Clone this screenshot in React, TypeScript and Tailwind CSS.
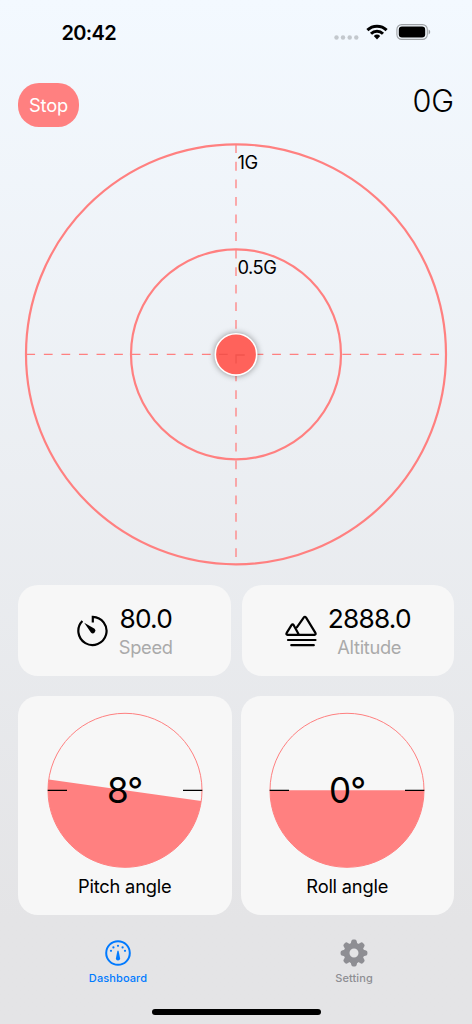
import React from 'react';

const ACCENT = '#ff8080';

function StatusBar() {
  return (
    <div className="flex h-[65px] items-center justify-between pl-[61.5px] pr-[41px]">
      <span className="text-[20px] font-semibold leading-none tracking-[-0.65px]">20:42</span>
      <div className="flex items-center">
        <svg width="25" height="5" viewBox="0 0 25 5" className="mr-[7px] mt-[9px]" fill="#c3c8cd">
          <circle cx="2.5" cy="2.5" r="2.2" />
          <circle cx="9" cy="2.5" r="2.2" />
          <circle cx="15.7" cy="2.5" r="2.2" />
          <circle cx="22.3" cy="2.5" r="2.2" />
        </svg>
        <svg width="22" height="16" viewBox="0 0 22 16" className="-mt-px mr-[8px]">
          <g fill="none" stroke="#000" strokeWidth="3">
            <path d="M1.4 6.1a13.8 13.8 0 0 1 19.2 0" />
            <path d="M5 9.8a8.6 8.6 0 0 1 12 0" />
          </g>
          <path d="M11 15.4 7.8 12.1a4.7 4.7 0 0 1 6.4 0z" />
        </svg>
        <svg width="35" height="16" viewBox="0 0 35 16" className="-mt-px">
          <rect x="0.9" y="0.6" width="30.4" height="14.8" rx="4.8" fill="none" stroke="#9da1a5" strokeWidth="1.1" />
          <rect x="2.8" y="2.5" width="26.4" height="11" rx="3.2" />
          <path d="M32.6 5.6v4.8c1-.4 1.6-1.3 1.6-2.4s-.6-2-1.6-2.4z" fill="#9da1a5" />
        </svg>
      </div>
    </div>
  );
}

function ForceDial() {
  return (
    <div className="relative mt-[15px] h-[424px] w-full">
      <svg width="472" height="424" viewBox="0 0 472 424" fill="none" stroke={ACCENT}>
        <circle cx="236" cy="212.3" r="210" strokeWidth="2.2" />
        <circle cx="236" cy="212.3" r="105" strokeWidth="2.2" />
        <path d="M236 2.3V422.7" strokeWidth="1.3" strokeDasharray="8.78 8.78" />
        <path d="M26.3 212.4H446" strokeWidth="1.3" strokeDasharray="8.78 8.78" />
        {/* Current force marker */}
        <circle cx="236" cy="212.4" r="20.7" fill="#ff625b" stroke="#fff" strokeWidth="1.6" className="drop-shadow-[0_0_3px_rgba(0,0,0,0.4)]" />
        <path d="M219 212.4H227.7M236 221.5V213H244.7" stroke="#f2544e" strokeWidth="1.3" />
      </svg>
      <span className="absolute left-[237.5px] top-[9px] text-[18.3px] leading-[23px] tracking-[-0.4px]">1G</span>
      <span className="absolute left-[237.5px] top-[114px] text-[18.3px] leading-[23px] tracking-[-0.5px]">0.5G</span>
    </div>
  );
}

function TimerIcon() {
  return (
    <svg width="32" height="32" viewBox="0 0 32 32">
      <path d="M6.4 6A14.1 14.1 0 1 0 16.8 1.8V7.4" fill="none" stroke="#000" strokeWidth="2.2" />
      <path d="M8.2 7.8 18.6 13.8A2.6 2.6 0 1 1 14.9 17.5z" />
    </svg>
  );
}

function MountainIcon() {
  return (
    <svg width="32" height="32" viewBox="0 0 32 32" fill="none" stroke="#000" strokeWidth="2.2" strokeLinecap="round" strokeLinejoin="round">
      <path d="M12 12.2 18.7 2.6Q19.9.9 21.1 2.6L30.4 17.9Q31.2 19.6 29.4 19.8H2.6Q.8 19.6 1.7 17.9L6.5 10.2Q7.6 8.5 8.7 10.2L13.8 19.6" />
      <path d="M3 25H30.5M6.3 30.2H28.8" />
    </svg>
  );
}

function StatCard({ icon, value, label }: { icon: React.ReactNode; value: string; label: string }) {
  return (
    <div className="flex h-[91px] items-center justify-center gap-[11px] rounded-[20px] bg-[#f7f7f7]">
      {icon}
      <div className="flex flex-col items-center">
        <span className="text-[26.3px] leading-[33px] tracking-[-0.8px]">{value}</span>
        <span className="text-[18.3px] leading-[25px] tracking-[-0.3px] text-[#aaaaaa]">{label}</span>
      </div>
    </div>
  );
}

function AngleCard({ angle, label }: { angle: number; label: string }) {
  const rad = (angle * Math.PI) / 180;
  const dx = 77 * Math.cos(rad);
  const dy = 77 * Math.sin(rad);
  return (
    <div className="flex h-[219px] flex-col items-center rounded-[20px] bg-[#f7f7f7] pt-[16.5px]">
      <div className="relative h-[156px] w-[156px]">
        <svg width="156" height="156" viewBox="0 0 156 156">
          <circle cx="78" cy="78.3" r="77" fill="none" stroke={ACCENT} strokeWidth="1" />
          <path d={`M${78 - dx} ${78.3 - dy}A77 77 0 0 0 ${78 + dx} ${78.3 + dy}z`} fill={ACCENT} />
          <path d="M.7 78.4H20M136 78.4H155.3" stroke="#000" strokeWidth="1.2" />
        </svg>
        <span className="absolute inset-0 flex items-center justify-center text-[35px] tracking-[-0.8px]">{angle}°</span>
      </div>
      <span className="mt-[6px] text-[18.3px] leading-[24px] tracking-[-0.2px]">{label}</span>
    </div>
  );
}

function GaugeIcon() {
  return (
    <svg width="26" height="26" viewBox="0 0 26 26" fill="#007aff">
      <circle cx="13" cy="13" r="11.8" fill="none" stroke="#007aff" strokeWidth="2" />
      <path d="M12.4 10.8h1.2l1.5 7.6a2.1 2.1 0 1 1-4.2 0z" />
      <circle cx="13" cy="5.8" r="1.1" />
      <circle cx="8.4" cy="7.4" r="1.1" />
      <circle cx="17.6" cy="7.4" r="1.1" />
      <circle cx="6" cy="10.8" r="1.1" />
      <circle cx="20" cy="10.8" r="1.1" />
    </svg>
  );
}

function GearIcon() {
  return (
    <svg width="28" height="28" viewBox="0 0 28 28">
      <circle cx="14" cy="14" r="7.4" fill="none" stroke="#8e8e93" strokeWidth="5.8" />
      {[0, 45, 90, 135, 180, 225, 270, 315].map((a) => (
        <path key={a} d="M10.6 5.5 11.2 2.6Q11.6.6 13 .6H15Q16.4.6 16.8 2.6L17.4 5.5z" fill="#8e8e93" transform={`rotate(${a} 14 14)`} />
      ))}
    </svg>
  );
}

function App() {
  return (
    <div className="flex h-[1024px] w-[472px] flex-col overflow-hidden bg-linear-to-b from-[#f3f9ff] to-[#e4e4e6] to-90% font-['Inter',sans-serif] text-black">
      <StatusBar />

      {/* Header */}
      <header className="mt-[18px] flex h-[44px] justify-between px-[18px]">
        <button className="h-[44px] w-[61px] rounded-[21px] bg-[#ff8080] pt-[2px] text-[18.3px] tracking-[-0.2px] text-white">Stop</button>
        <span className="text-[30.7px] font-light leading-[36px] tracking-[-0.2px]">0G</span>
      </header>

      <ForceDial />

      {/* Speed and altitude */}
      <div className="mt-[19px] grid grid-cols-2 gap-[11px] px-[18px]">
        <StatCard icon={<TimerIcon />} value="80.0" label="Speed" />
        <StatCard icon={<MountainIcon />} value="2888.0" label="Altitude" />
      </div>

      {/* Tilt */}
      <div className="mt-[19.5px] grid grid-cols-2 gap-[9px] px-[18px]">
        <AngleCard angle={8} label="Pitch angle" />
        <AngleCard angle={0} label="Roll angle" />
      </div>

      {/* Tab bar */}
      <nav className="mt-[24.5px] grid grid-cols-2 text-[11px] font-medium leading-[14px] tracking-[0.1px]">
        <a className="flex flex-col items-center gap-[4px] text-[#007aff]">
          <span className="flex h-[28px] items-center"><GaugeIcon /></span>
          Dashboard
        </a>
        <a className="flex flex-col items-center gap-[4px] text-[#8e8e93]">
          <span className="flex h-[28px] items-center"><GearIcon /></span>
          Setting
        </a>
      </nav>
      <div className="mx-auto mt-[24px] h-[6px] w-[169px] shrink-0 rounded-full bg-black" />
    </div>
  );
}

export default App;
